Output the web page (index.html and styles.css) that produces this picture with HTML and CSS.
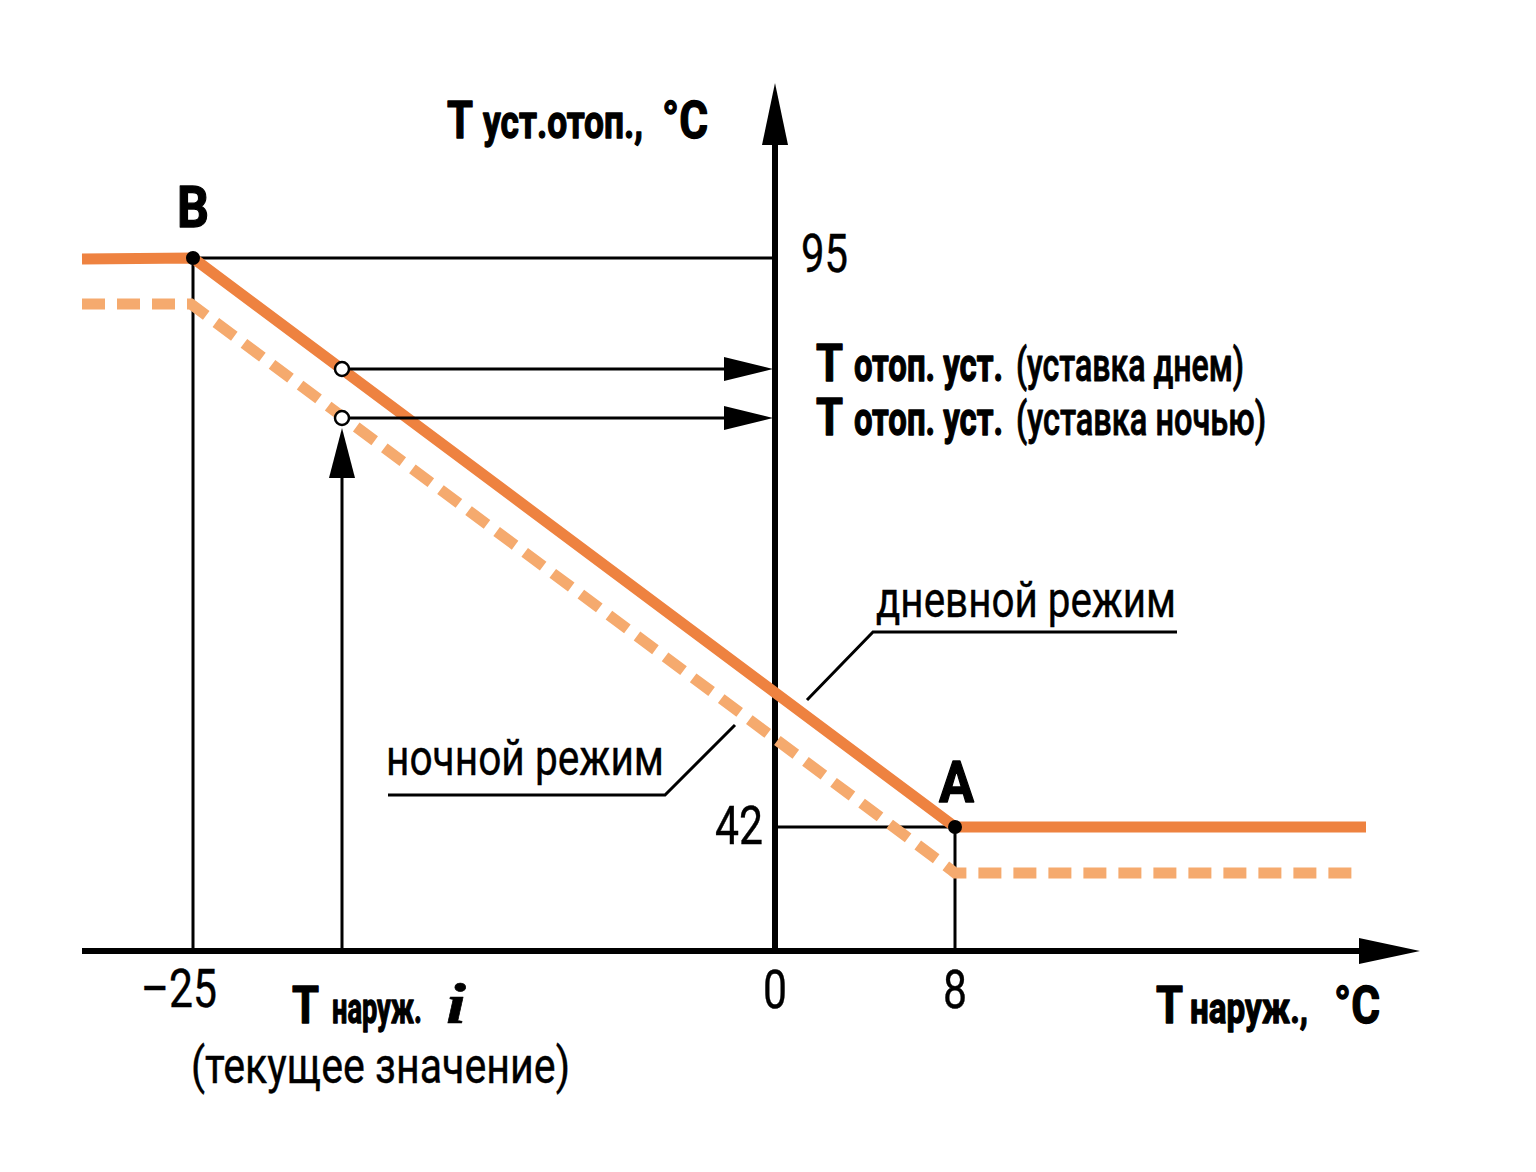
FILE: index.html
```html
<!DOCTYPE html>
<html lang="ru">
<head>
<meta charset="utf-8">
<title>График температуры отопления</title>
<link rel="stylesheet" href="styles.css">
</head>
<body>
<div class="figure">
<svg class="chart" width="1536" height="1172" viewBox="0 0 1536 1172" xmlns="http://www.w3.org/2000/svg">
  <!-- thin guide lines -->
  <line class="thin" x1="193" y1="258" x2="775" y2="258"/>
  <line class="thin" x1="193" y1="258" x2="193" y2="951"/>
  <line class="thin" x1="775" y1="827" x2="955" y2="827"/>
  <line class="thin" x1="955" y1="827" x2="955" y2="951"/>
  <line class="thin" x1="342" y1="951" x2="342" y2="470"/>
  <polyline class="thin" points="807,700 873,632 1177,632"/>
  <polyline class="thin" points="388,795 665,795 735,725"/>

  <!-- axes -->
  <line class="axis" x1="775" y1="951" x2="775" y2="140"/>
  <polygon class="head" points="775,83 762,145 788,145"/>
  <line class="axis" x1="82" y1="951" x2="1362" y2="951"/>
  <polygon class="head" points="1420,951 1359,938 1359,964"/>

  <!-- curves -->
  <polyline class="night" points="82,304 191,304 950,869 955,873 1356,873"/>
  <polyline class="day" points="82,259 193,258 955,827 1366,827"/>

  <!-- setpoint arrows -->
  <line class="thin" x1="349" y1="369" x2="730" y2="369"/>
  <polygon class="head" points="773,369 724,357 724,381"/>
  <line class="thin" x1="349" y1="418" x2="730" y2="418"/>
  <polygon class="head" points="773,418 724,406 724,430"/>
  <polygon class="head" points="342,428 329,478 355,478"/>

  <!-- points -->
  <circle class="dot" cx="193" cy="258" r="7"/>
  <circle class="dot" cx="955" cy="827" r="7"/>
  <circle class="ring" cx="342" cy="369" r="7"/>
  <circle class="ring" cx="342" cy="418" r="7"/>

  <!-- labels -->
  <text class="lbl-b"><tspan x="447" y="138" class="big" textLength="26" lengthAdjust="spacingAndGlyphs">Т</tspan><tspan x="483" y="138" class="sub" textLength="160" lengthAdjust="spacingAndGlyphs">уст.отоп.,</tspan><tspan x="662" y="138" class="big" textLength="46" lengthAdjust="spacingAndGlyphs">°С</tspan></text>

  <text class="lbl-b pt" x="177" y="227" textLength="32" lengthAdjust="spacingAndGlyphs">В</text>
  <text class="lbl-b pt" x="939" y="802" textLength="35" lengthAdjust="spacingAndGlyphs">А</text>

  <text class="num" x="801" y="272" textLength="47" lengthAdjust="spacingAndGlyphs">95</text>
  <text class="num" x="715" y="844" textLength="48" lengthAdjust="spacingAndGlyphs">42</text>
  <text class="num" x="141" y="1007" textLength="76" lengthAdjust="spacingAndGlyphs">–25</text>
  <text class="num" x="763" y="1008" textLength="24" lengthAdjust="spacingAndGlyphs">0</text>
  <text class="num" x="943" y="1008" textLength="24" lengthAdjust="spacingAndGlyphs">8</text>

  <text class="lbl-b"><tspan x="816" y="381" class="big" textLength="27" lengthAdjust="spacingAndGlyphs">Т</tspan><tspan x="854" y="381" class="sub" textLength="149" lengthAdjust="spacingAndGlyphs">отоп. уст.</tspan><tspan x="1016" y="381" class="paren" textLength="228" lengthAdjust="spacingAndGlyphs">(уставка днем)</tspan></text>
  <text class="lbl-b"><tspan x="816" y="435" class="big" textLength="27" lengthAdjust="spacingAndGlyphs">Т</tspan><tspan x="854" y="435" class="sub" textLength="149" lengthAdjust="spacingAndGlyphs">отоп. уст.</tspan><tspan x="1016" y="435" class="paren" textLength="250" lengthAdjust="spacingAndGlyphs">(уставка ночью)</tspan></text>

  <text class="mode" x="876" y="617" textLength="300" lengthAdjust="spacingAndGlyphs">дневной режим</text>
  <text class="mode" x="386" y="775" textLength="278" lengthAdjust="spacingAndGlyphs">ночной режим</text>

  <text class="lbl-b"><tspan x="292" y="1023" class="big" textLength="27" lengthAdjust="spacingAndGlyphs">Т</tspan><tspan x="332" y="1023" class="sub2" textLength="90" lengthAdjust="spacingAndGlyphs">наруж.</tspan><tspan x="446" y="1023" class="ital" textLength="20" lengthAdjust="spacingAndGlyphs">i</tspan></text>
  <text class="mode" x="191" y="1083" textLength="379" lengthAdjust="spacingAndGlyphs">(текущее значение)</text>

  <text class="lbl-b"><tspan x="1156" y="1023" class="big" textLength="27" lengthAdjust="spacingAndGlyphs">Т</tspan><tspan x="1190" y="1023" class="sub2" textLength="118" lengthAdjust="spacingAndGlyphs">наруж.,</tspan><tspan x="1334" y="1023" class="big" textLength="46" lengthAdjust="spacingAndGlyphs">°С</tspan></text>
</svg>
</div>
</body>
</html>
```

FILE: styles.css
```css
html, body {
  margin: 0;
  padding: 0;
  background: #ffffff;
}

.figure {
  width: 1536px;
  height: 1172px;
  overflow: hidden;
}

.chart {
  display: block;
}

.thin {
  stroke: #000000;
  stroke-width: 3;
  fill: none;
}

.axis {
  stroke: #000000;
  stroke-width: 6;
  fill: none;
}

.head {
  fill: #000000;
}

.day {
  fill: none;
  stroke: #ee8240;
  stroke-width: 11;
  stroke-linejoin: miter;
}

.night {
  fill: none;
  stroke: #f5aa6e;
  stroke-width: 11;
  stroke-dasharray: 23 12;
}

.dot {
  fill: #000000;
}

.ring {
  fill: #ffffff;
  stroke: #000000;
  stroke-width: 2.5;
}

.lbl-b {
  font-family: Roboto, "Liberation Sans", sans-serif;
  font-weight: 700;
  fill: #000000;
  stroke: #000000;
  stroke-width: 1.3px;
  stroke-linejoin: round;
}

.lbl-b .big {
  font-size: 52px;
}

.lbl-b .sub {
  font-size: 46px;
}

.lbl-b .sub2 {
  font-size: 43px;
}

.lbl-b .paren {
  font-size: 47px;
  font-weight: 500;
  stroke-width: 0.9px;
}

.lbl-b .ital {
  font-family: "Liberation Serif", serif;
  font-style: italic;
  font-size: 56px;
  stroke-width: 0.6px;
}

.pt {
  font-size: 58px;
}

.num {
  font-family: Roboto, "Liberation Sans", sans-serif;
  font-weight: 400;
  font-size: 54px;
  fill: #000000;
  stroke: #000000;
  stroke-width: 0.4px;
}

.mode {
  font-family: Roboto, "Liberation Sans", sans-serif;
  font-weight: 400;
  font-size: 50px;
  fill: #000000;
  stroke: #000000;
  stroke-width: 0.4px;
}
```
